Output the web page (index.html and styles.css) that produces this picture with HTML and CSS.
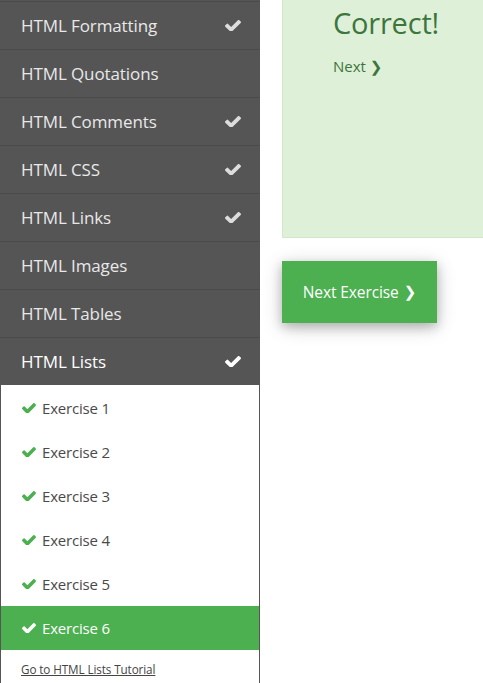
FILE: index.html
```html
<!DOCTYPE html>
<html>
<head>
<meta charset="utf-8">
<link rel="stylesheet" href="styles.css">
</head>
<body>
<div class="page">
  <nav class="sidebar">
    <div class="topic"><span>HTML Formatting</span><svg class="chk" viewBox="121 338 1550 1088" preserveAspectRatio="none"><path d="M1671 566q0 40-28 68l-724 724-136 136q-28 28-68 28t-68-28l-136-136-362-362q-28-28-28-68t28-68l136-136q28-28 68-28t68 28l294 295 656-657q28-28 68-28t68 28l136 136q28 28 28 68z"/></svg></div>
    <div class="topic"><span>HTML Quotations</span></div>
    <div class="topic"><span>HTML Comments</span><svg class="chk" viewBox="121 338 1550 1088" preserveAspectRatio="none"><path d="M1671 566q0 40-28 68l-724 724-136 136q-28 28-68 28t-68-28l-136-136-362-362q-28-28-28-68t28-68l136-136q28-28 68-28t68 28l294 295 656-657q28-28 68-28t68 28l136 136q28 28 28 68z"/></svg></div>
    <div class="topic"><span>HTML CSS</span><svg class="chk" viewBox="121 338 1550 1088" preserveAspectRatio="none"><path d="M1671 566q0 40-28 68l-724 724-136 136q-28 28-68 28t-68-28l-136-136-362-362q-28-28-28-68t28-68l136-136q28-28 68-28t68 28l294 295 656-657q28-28 68-28t68 28l136 136q28 28 28 68z"/></svg></div>
    <div class="topic"><span>HTML Links</span><svg class="chk" viewBox="121 338 1550 1088" preserveAspectRatio="none"><path d="M1671 566q0 40-28 68l-724 724-136 136q-28 28-68 28t-68-28l-136-136-362-362q-28-28-28-68t28-68l136-136q28-28 68-28t68 28l294 295 656-657q28-28 68-28t68 28l136 136q28 28 28 68z"/></svg></div>
    <div class="topic"><span>HTML Images</span></div>
    <div class="topic"><span>HTML Tables</span></div>
    <div class="topic active"><span>HTML Lists</span><svg class="chk" viewBox="121 338 1550 1088" preserveAspectRatio="none"><path d="M1671 566q0 40-28 68l-724 724-136 136q-28 28-68 28t-68-28l-136-136-362-362q-28-28-28-68t28-68l136-136q28-28 68-28t68 28l294 295 656-657q28-28 68-28t68 28l136 136q28 28 28 68z"/></svg></div>
    <div class="exercises">
      <div class="ex"><svg class="exchk" viewBox="121 338 1550 1088" preserveAspectRatio="none"><path d="M1671 566q0 40-28 68l-724 724-136 136q-28 28-68 28t-68-28l-136-136-362-362q-28-28-28-68t28-68l136-136q28-28 68-28t68 28l294 295 656-657q28-28 68-28t68 28l136 136q28 28 28 68z"/></svg><span>Exercise 1</span></div>
      <div class="ex"><svg class="exchk" viewBox="121 338 1550 1088" preserveAspectRatio="none"><path d="M1671 566q0 40-28 68l-724 724-136 136q-28 28-68 28t-68-28l-136-136-362-362q-28-28-28-68t28-68l136-136q28-28 68-28t68 28l294 295 656-657q28-28 68-28t68 28l136 136q28 28 28 68z"/></svg><span>Exercise 2</span></div>
      <div class="ex"><svg class="exchk" viewBox="121 338 1550 1088" preserveAspectRatio="none"><path d="M1671 566q0 40-28 68l-724 724-136 136q-28 28-68 28t-68-28l-136-136-362-362q-28-28-28-68t28-68l136-136q28-28 68-28t68 28l294 295 656-657q28-28 68-28t68 28l136 136q28 28 28 68z"/></svg><span>Exercise 3</span></div>
      <div class="ex"><svg class="exchk" viewBox="121 338 1550 1088" preserveAspectRatio="none"><path d="M1671 566q0 40-28 68l-724 724-136 136q-28 28-68 28t-68-28l-136-136-362-362q-28-28-28-68t28-68l136-136q28-28 68-28t68 28l294 295 656-657q28-28 68-28t68 28l136 136q28 28 28 68z"/></svg><span>Exercise 4</span></div>
      <div class="ex"><svg class="exchk" viewBox="121 338 1550 1088" preserveAspectRatio="none"><path d="M1671 566q0 40-28 68l-724 724-136 136q-28 28-68 28t-68-28l-136-136-362-362q-28-28-28-68t28-68l136-136q28-28 68-28t68 28l294 295 656-657q28-28 68-28t68 28l136 136q28 28 28 68z"/></svg><span>Exercise 5</span></div>
      <div class="ex current"><svg class="exchk" viewBox="121 338 1550 1088" preserveAspectRatio="none"><path d="M1671 566q0 40-28 68l-724 724-136 136q-28 28-68 28t-68-28l-136-136-362-362q-28-28-28-68t28-68l136-136q28-28 68-28t68 28l294 295 656-657q28-28 68-28t68 28l136 136q28 28 28 68z"/></svg><span>Exercise 6</span></div>
      <a class="tutlink" href="#">Go to HTML Lists Tutorial</a>
    </div>
  </nav>
  <main class="main">
    <div class="result">
      <h1 class="correct">Correct!</h1>
      <a class="next" href="#">Next <span class="chev">&#x276F;</span></a>
    </div>
    <a class="nextbtn" href="#">Next Exercise <span class="chev">&#x276F;</span></a>
  </main>
</div>
</body>
</html>
```
FILE: styles.css
```css
html, body {
  margin: 0;
  padding: 0;
  background: #fff;
  overflow: hidden;
}
body {
  font-family: "Open Sans", "Noto Sans", sans-serif;
  width: 483px;
  height: 683px;
}
.page {
  display: flex;
  align-items: flex-start;
  height: 683px;
}
.sidebar {
  width: 260px;
  flex: 0 0 260px;
  background: #555;
  padding-top: 1px;
  height: 682px;
  display: flex;
  flex-direction: column;
}
.topic {
  height: 47px;
  border-top: 1px solid #4b4b4b;
  display: flex;
  align-items: center;
  justify-content: space-between;
  padding: 0 19px 0 21px;
  color: #e8e8e8;
  font-size: 17px;
  letter-spacing: -0.1px;
}
.topic.active {
  color: #fff;
}
.chk {
  width: 16px;
  height: 11px;
  fill: #ddd;
}
.topic.active .chk {
  fill: #fff;
}
.exercises {
  flex: 1;
  background: #fff;
  border-left: 1px solid #555;
  border-right: 1px solid #555;
  padding-top: 1px;
  display: flex;
  flex-direction: column;
}
.ex {
  height: 44px;
  display: flex;
  align-items: center;
  padding-left: 21px;
  color: #4a4a4a;
  font-size: 15px;
  letter-spacing: -0.2px;
}
.exchk {
  width: 14px;
  height: 10px;
  fill: #4caf50;
  margin-right: 6px;
}
.ex.current {
  background: #4caf50;
  color: #fff;
}
.ex.current .exchk {
  fill: #fff;
}
.tutlink {
  margin: 11px 0 0 20px;
  font-size: 11.7px;
  color: #444;
  text-decoration: underline;
  letter-spacing: -0.1px;
}
.main {
  flex: 1;
  padding-left: 22px;
  display: flex;
  flex-direction: column;
  align-items: flex-start;
}
.result {
  align-self: stretch;
  margin-right: -20px;
  height: 237px;
  background: #dff0d8;
  border: 1px solid #d0e9c6;
  border-top: none;
  padding-left: 50px;
  color: #3c763d;
}
.correct {
  margin: 0;
  padding-top: 0;
  font-weight: normal;
  font-size: 29px;
  line-height: 46px;
  letter-spacing: -0.2px;
}
.next {
  display: inline-block;
  margin-top: 10px;
  font-size: 15px;
  color: #3c763d;
  text-decoration: none;
}
.chev {
  font-family: "DejaVu Sans", sans-serif;
  font-size: 15px;
  line-height: 1;
}
.nextbtn {
  margin-top: 23px;
  width: 155px;
  height: 62px;
  background: #4caf50;
  color: #fff;
  text-decoration: none;
  font-size: 15.5px;
  letter-spacing: -0.1px;
  display: flex;
  align-items: center;
  justify-content: center;
  box-shadow: 0 4px 10px 0 rgba(0,0,0,0.2), 0 4px 20px 0 rgba(0,0,0,0.19);
}
.nextbtn .chev {
  margin-left: 5px;
}
```
